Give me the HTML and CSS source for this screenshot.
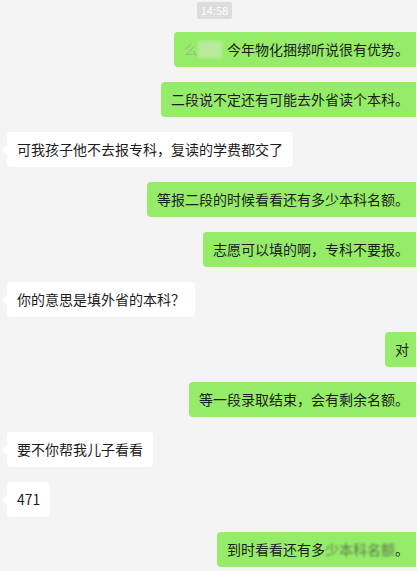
FILE: index.html
```html
<!DOCTYPE html>
<html lang="zh-CN">
<head>
    <meta charset="UTF-8">
    <meta name="viewport" content="width=device-width, initial-scale=1.0">
    <title>聊天记录</title>
    <link rel="stylesheet" href="styles.css">
</head>
<body>
    <div class="chat">
        <div class="time"><span>14:58</span></div>

        <div class="row me">
            <div class="bubble green"><span class="masked"><span class="faint">么</span><span class="blob"></span></span>今年物化捆绑听说很有优势。</div>
        </div>
        <div class="row me">
            <div class="bubble green">二段说不定还有可能去外省读个本科。</div>
        </div>
        <div class="row them">
            <div class="bubble white">可我孩子他不去报专科，复读的学费都交了</div>
        </div>
        <div class="row me">
            <div class="bubble green">等报二段的时候看看还有多少本科名额。</div>
        </div>
        <div class="row me">
            <div class="bubble green">志愿可以填的啊，专科不要报。</div>
        </div>
        <div class="row them">
            <div class="bubble white">你的意思是填外省的本科？</div>
        </div>
        <div class="row me">
            <div class="bubble green">对</div>
        </div>
        <div class="row me">
            <div class="bubble green">等一段录取结束，会有剩余名额。</div>
        </div>
        <div class="row them">
            <div class="bubble white">要不你帮我儿子看看</div>
        </div>
        <div class="row them">
            <div class="bubble white">471</div>
        </div>
        <div class="row me">
            <div class="bubble green">到时看看还有多<span class="pixel">少本科名额</span>。</div>
        </div>
    </div>
</body>
</html>
```

FILE: styles.css
```css
body {
    margin: 0;
    background-color: #f4f4f4;
    font-family: "Microsoft YaHei", "Noto Sans CJK SC", "Noto Sans", sans-serif;
    color: #1c1c1c;
}
.chat {
    display: flex;
    flex-direction: column;
    gap: 15px;
    padding: 2px 1px 0 7px;
}
.time {
    display: flex;
    justify-content: center;
    margin-bottom: -2px;
    padding-left: 6px;
}
.time span {
    background: #dcdcdc;
    color: #fff;
    font-size: 11px;
    line-height: 17px;
    padding: 0 4px;
    border-radius: 2px;
}
.row {
    display: flex;
}
.row.me {
    justify-content: flex-end;
}
.row.them {
    justify-content: flex-start;
}
.bubble {
    position: relative;
    font-size: 14px;
    line-height: 19px;
    padding: 8px 10px;
    border-radius: 4px;
    white-space: nowrap;
}
.bubble.green {
    background: #95ec69;
    padding-right: 7px;
    border-radius: 4px 0 0 4px;
}
.bubble.white {
    background: #fff;
}
.bubble.white::before {
    content: "";
    position: absolute;
    left: -5px;
    top: 13px;
    border-top: 5px solid transparent;
    border-bottom: 5px solid transparent;
    border-right: 5px solid #fff;
}
.masked {
    display: inline-flex;
    align-items: center;
    width: 43px;
    vertical-align: top;
}
.faint {
    color: #9dbd86;
    filter: blur(0.6px);
}
.blob {
    display: inline-block;
    width: 24px;
    height: 17px;
    background: #b9ea9e;
    filter: blur(1.5px);
}
.pixel {
    filter: blur(1.2px);
    color: #5c7a50;
}
```
